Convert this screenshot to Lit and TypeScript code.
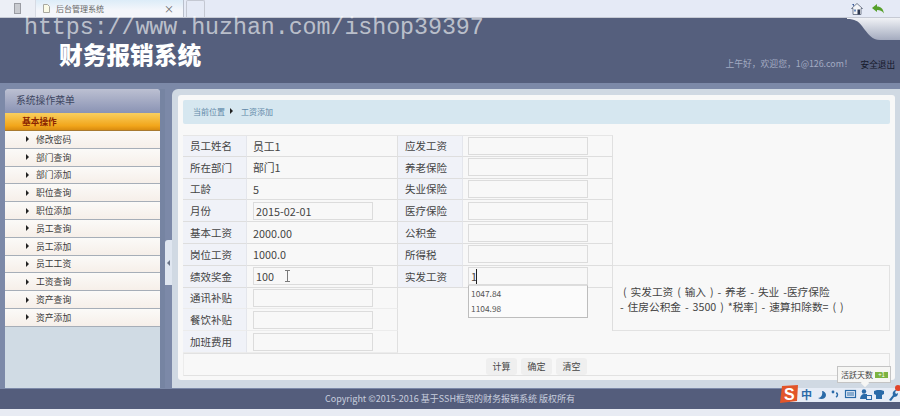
import { LitElement, html, css, svg } from "lit";
import { customElement } from "lit/decorators.js";

const MENU = ["修改密码","部门查询","部门添加","职位查询","职位添加","员工查询","员工添加","员工工资","工资查询","资产查询","资产添加"];
type Cell = { label: string; text?: string; input?: string };
const LEFT: Cell[] = [
  { label: "员工姓名", text: "员工1" },
  { label: "所在部门", text: "部门1" },
  { label: "工龄", text: "5" },
  { label: "月份", input: "2015-02-01" },
  { label: "基本工资", text: "2000.00" },
  { label: "岗位工资", text: "1000.0" },
  { label: "绩效奖金", input: "100" },
  { label: "通讯补贴", input: "" },
  { label: "餐饮补贴", input: "" },
  { label: "加班费用", input: "" },
];
const RIGHT = ["应发工资", "养老保险", "失业保险", "医疗保险", "公积金", "所得税"];

@customElement("app-root")
export class AppRoot extends LitElement {
  static styles = css`
    :host { display: block; width: 900px; height: 416px; overflow: hidden; position: relative;
      font-family: "Noto Sans CJK SC", "Noto Sans", sans-serif; background: #e8ebf4; }
    .tabs { height: 18px; box-sizing: border-box; background: #e5eaf6; border-bottom: 1px solid #c6cad4; display: flex; align-items: stretch; }
    .tab-phone { width: 35px; display: flex; align-items: center; justify-content: center; background: #eceff6; border-right: 1px solid #d7dbe4; }
    .tab { width: 148px; box-sizing: border-box; display: flex; align-items: center; padding: 0 9px 0 7px; gap: 6px; font-size: 8px; color: #666;
      background: linear-gradient(#dcecf8, #f4f6fb 60%); border-right: 1px solid #b9bfcc; }
    .tab span { flex: 1; }
    .tab b { font-weight: 400; color: #666; font-size: 10px; }
    .new-tab { width: 19px; margin: 0 0 0 2px; border: 1px solid #c4c8d2; border-bottom: 0; border-radius: 2px 2px 0 0; box-sizing: border-box; }
    .tools { margin-left: auto; display: flex; align-items: center; gap: 9px; padding-right: 16px; }
    .header { height: 65px; background: #555f7d; position: relative; }
    .brand { padding: 24px 0 0 59px; font-size: 23.7px; line-height: 24px; font-weight: 900; color: #fff; }
    .notch { position: absolute; top: 0; right: 0; }
    .user { position: absolute; right: 5px; top: 39px; display: flex; gap: 8px; font-size: 8.8px; line-height: 14px; color: #a3abc2; }
    .user b { font-weight: 400; color: #15192a; font-size: 8.6px; }
    .watermark { position: absolute; left: 24px; top: 18px; font-family: "Liberation Mono", monospace; font-size: 23.3px; line-height: 20px;
      letter-spacing: -.05px; color: rgba(255,255,255,.62); white-space: nowrap; }
    .body { height: 306px; box-sizing: border-box; padding: 6px 0 0 5px; background: #7c89a8; display: flex; }
    .side { width: 155px; height: 299px; background: #d0dbe4; border-radius: 4px 4px 0 0; overflow: hidden; }
    .side-title { height: 24px; box-sizing: border-box; padding: 5px 0 0 11px; font-size: 9.8px; line-height: 12px; color: #3d4560; background: linear-gradient(#bcc0d2, #8a93b4); }
    .side-group { height: 18px; box-sizing: border-box; padding-left: 17px; font-size: 8.7px; line-height: 17px; color: #8a2300; font-weight: 700;
      background: linear-gradient(#f9cf5f, #f2a61b 75%, #d98c10); border-bottom: 1px solid #a87a30; }
    .menu { display: grid; grid-auto-rows: 17.8px; }
    .menu div { display: flex; align-items: center; gap: 7px; padding-left: 21px; box-sizing: border-box; font-size: 8.8px; color: #3a3a3a;
      background: linear-gradient(#fbfaf8, #f6efe9); border-bottom: 1px solid #a6aeb8; }
    .menu i { width: 0; height: 0; border-left: 3px solid #222; border-top: 3px solid transparent; border-bottom: 3px solid transparent; }
    .split { width: 12px; padding: 151px 0 0 5px; box-sizing: border-box; background: linear-gradient(90deg, #7684a2 5px, #7c89a8 5px); height: 299px; }
    .toggle { width: 7px; height: 45px; box-sizing: border-box; padding-left: 2px; display: flex; align-items: center; background: #dfe6f0; border-radius: 3px 0 0 0; }
    .toggle i { width: 0; height: 0; border-right: 3px solid #6a7488; border-top: 3px solid transparent; border-bottom: 3px solid transparent; }
    .wrap { width: 728px; height: 299px; box-sizing: border-box; padding: 6px 5px 8px 6px; background: #d0d9e3; border-radius: 6px 0 0 0; }
    .panel { height: 285px; box-sizing: border-box; background: #f8f8f8; padding: 5px 5px 0; border-radius: 3px; }
    .crumb { height: 24px; box-sizing: border-box; padding: 0 0 2px 10px; background: #d6e7f0; display: flex; align-items: center; gap: 5px; font-size: 8px; color: #5f87a8; border-radius: 2px; }
    .crumb i { width: 0; height: 0; border-left: 3px solid #222; border-top: 3px solid transparent; border-bottom: 3px solid transparent; margin-right: 3px; }
    .sheet { margin-top: 11px; display: grid; grid-template-columns: 63px 152px 64px 151px 277px; grid-template-rows: repeat(10, 21.8px); height: 218px; position: relative; }
    .lab, .val { box-sizing: border-box; display: flex; align-items: center; font-size: 10.5px; color: #444; border-bottom: 1px solid #dedede; }
    .lab { background: #f0f2f8; padding-left: 7px; }
    .val { padding-left: 6px; border-left: 1px solid #e4e6ec; border-right: 1px solid #e0e0e0; position: relative; font-size: 10.8px; }
    .first { border-top: 1px solid #e6e6e6; }
    .low { border-bottom-color: #ececec; }
    .val.r { padding-left: 5px; }
    .field { width: 120px; height: 18px; box-sizing: border-box; border: 1px solid #dcdcdc; background: #f8f8f8; padding: 0 2px; font: inherit; color: #444; outline: none; display: block; }
    .blank { grid-column: 3 / 5; grid-row: 8 / 10; border-right: 1px solid #dedede; }
    .formula { grid-column: 5; grid-row: 7 / 10; border: 1px solid #e2e2e2; border-left: 0; box-sizing: border-box; padding: 18px 0 0 7px; margin-top: -1px; font-size: 10.7px; line-height: 15px; color: #444; white-space: pre; word-spacing: 1.5px; }
    .formula span { padding-left: 3px; }
    .caret { position: absolute; left: 13px; top: 3px; width: 1px; height: 15px; background: #222; }
    .drop { position: absolute; left: 5px; top: 19px; width: 120px; height: 33px; box-sizing: border-box; background: #fbfbfb; border: 1px solid #bdbdbd; border-top-color: #ddd; font-size: 8.4px; line-height: 15.5px; color: #555; padding: 0 2px; z-index: 2; }
    .beam { position: absolute; left: 38px; top: 4px; }
    .actions { height: 23px; box-sizing: border-box; border: 1px solid #e2e2e2; border-left-color: #ececec; display: flex; justify-content: center; align-items: center; gap: 4px; padding-top: 3px; }
    .actions span { width: 31px; height: 17px; background: #efefef; border-radius: 3px; font-size: 9px; line-height: 17px; text-align: center; color: #444; }
    .footer { height: 20px; background: #545d7c; color: #c8cede; font-size: 9px; line-height: 20px; text-align: center; }
    .bottom { height: 7px; background: #e8ebf3; }
    .ime { position: absolute; left: 780px; top: 385px; width: 120px; height: 18px; }
    .tip { position: absolute; left: 837px; top: 366px; width: 54px; height: 17px; box-sizing: border-box; background: #f6f6f4; border: 1px solid #c4c4c4; font-size: 8px; line-height: 15px; padding-left: 3px; color: #444; display: flex; gap: 2px; white-space: nowrap; }
    .tip b { flex: none; align-self: center; width: 13px; height: 6px; background: #7cb342; color: #fff; font-size: 6px; line-height: 6px; font-weight: 400; text-align: center; }
    .tip::after { content: ""; position: absolute; left: 24px; bottom: -4px; width: 6px; height: 6px; background: #f6f6f4; transform: rotate(45deg); }
  `;

  private leftCell(c: Cell, i: number) {
    const low = i > 6 ? "low" : "";
    const first = i === 0 ? "first" : "";
    const left = html`<div class="lab ${low} ${first}" style="grid-column:1;grid-row:${i + 1}">${c.label}</div>
      <div class="val ${low} ${first}" style="grid-column:2;grid-row:${i + 1}">
        ${c.input !== undefined ? html`<input class="field" .value=${c.input} readonly />` : c.text}
        ${c.label === "绩效奖金" ? html`<svg class="beam" width="5" height="12" viewBox="0 0 5 12"><path d="M0 .5h5M0 11.5h5M2.5 .5v11" stroke="#7a7a7a" fill="none"/></svg>` : ""}
      </div>`;
    if (i < 6) {
      return html`${left}<div class="lab ${first}" style="grid-column:3;grid-row:${i + 1}">${RIGHT[i]}</div>
        <div class="val r ${first}" style="grid-column:4;grid-row:${i + 1}"><input class="field" readonly /></div>`;
    }
    if (i === 6) {
      return html`${left}<div class="lab" style="grid-column:3;grid-row:7">实发工资</div>
        <div class="val r" style="grid-column:4;grid-row:7"><input class="field" .value=${"1"} readonly /><span class="caret"></span>
          <div class="drop">1047.84<br />1104.98</div></div>`;
    }
    if (i === 7) return html`${left}<div class="blank"></div>`;
    return left;
  }

  private ime() {
    return html`<svg class="ime" width="120" height="18" viewBox="0 0 120 18">
      ${svg`<rect x="10" y="3" width="110" height="14" fill="#e6ecf6"/>
      <path d="M2 1 18 0 17 16 0 18z" fill="#e2552a"/>
      <text x="4" y="15" font-size="16" font-weight="900" font-family="Liberation Sans" fill="#fff">S</text>
      <text x="21" y="14" font-size="11" font-weight="700" font-family="Noto Sans CJK SC" fill="#2a6aa8">中</text>
      <path d="M42 6c1 4-1 7-4 7 3 2 8 1 8-3 0-2-2-4-4-4z" fill="#2a6aa8"/>
      <circle cx="53" cy="7" r="1.4" fill="#2a6aa8"/><path d="M56 8c2 0 2 3 0 4" stroke="#2a6aa8" stroke-width="1.5" fill="none"/>
      <rect x="65.500" y="5.500" width="10" height="7" fill="none" stroke="#2a6aa8" stroke-width="1.2"/>
      <path d="M67 8h7M67 10h7" stroke="#2a6aa8"/>
      <circle cx="84" cy="6.500" r="2.200" fill="#2a6aa8"/><path d="M80 14c0-3 2-5 4-5h3v5z" fill="#2a6aa8"/><rect x="86.500" y="10.500" width="5" height="4" fill="#e6ecf6" stroke="#2a6aa8"/>
      <path d="M94 6l3-1h4l3 1 0 3-2 1v4h-6v-4l-2-1z" fill="#2a6aa8"/>
      <path d="M109 15l4-5c-1-3 1-5 4-5l-2 2 1 2 2-1c0 3-2 4-4 4l-3 4z" fill="#2a6aa8"/>
      <circle cx="118" cy="3" r="3" fill="#e2452a"/>`}
    </svg>`;
  }

  render() {
    return html`
      <div class="tabs">
        <div class="tab-phone"><svg width="7" height="11" viewBox="0 0 7 11"><rect x=".5" y=".5" width="6" height="10" fill="#c9cbd0" stroke="#9a9ca3"/></svg></div>
        <div class="tab">
          <svg width="7" height="9" viewBox="0 0 7 9"><path d="M.5.5h4l2 2v6h-6z" fill="#fbfbe8" stroke="#a8a8a0"/></svg>
          <span>后台管理系统</span><b>×</b>
        </div>
        <div class="new-tab"></div>
        <div class="tools">
          <svg width="12" height="12" viewBox="0 0 12 12"><path d="M6 .5 .5 5.500h1.500v6h8v-6h1.500z" fill="#f4f5f8" stroke="#5b6478" stroke-width=".8"/><rect x="6.500" y="6.500" width="2.500" height="5" fill="#2f3a52"/><rect x="3" y="6.500" width="2" height="2" fill="#6f8fc0"/><path d="M1 1h2v2.500" fill="#3a5a98"/></svg>
          <svg width="12" height="10" viewBox="0 0 12 10"><path d="M0 4 5 0v2.500c4 0 6 2 7 7-2-3-4-3.500-7-3.500V8z" fill="#55a02a"/></svg>
        </div>
      </div>
      <div class="header">
        <div class="brand">财务报销系统</div>
        <svg class="notch" width="53" height="22" viewBox="0 0 53 22"><defs><linearGradient id="n" x1="0" y1="0" x2="0" y2="1"><stop offset="0" stop-color="#f0f2f6"/><stop offset="1" stop-color="#a4abbf"/></linearGradient></defs><path d="M0 1C8 1 11 3 15 8 21 16 25 22 33 22H53V0H0z" fill="url(#n)"/></svg>
        <div class="user"><span>上午好，欢迎您，1@126.com！</span><b>安全退出</b></div>
      </div>
      <div class="watermark">https://www.huzhan.com/ishop39397</div>
      <div class="body">
        <aside class="side">
          <div class="side-title">系统操作菜单</div>
          <div class="side-group">基本操作</div>
          <div class="menu">${MENU.map((m) => html`<div><i></i>${m}</div>`)}</div>
        </aside>
        <div class="split"><div class="toggle"><i></i></div></div>
        <div class="wrap">
          <div class="panel">
            <div class="crumb">当前位置<i></i>工资添加</div>
            <div class="sheet">
              ${LEFT.map((c, i) => this.leftCell(c, i))}
              <div class="formula"><span>( 实发工资 ( 输入 ) - 养老 - 失业 -医疗保险</span>
- 住房公积金 - 3500 ) *税率] - 速算扣除数= ( )</div>
            </div>
            <div class="actions"><span>计算</span><span>确定</span><span>清空</span></div>
          </div>
        </div>
      </div>
      <div class="footer">Copyright ©2015-2016 基于SSH框架的财务报销系统 版权所有</div>
      <div class="bottom"></div>
      <div class="tip">活跃天数<b>+1</b></div>
      ${this.ime()}
    `;
  }
}
